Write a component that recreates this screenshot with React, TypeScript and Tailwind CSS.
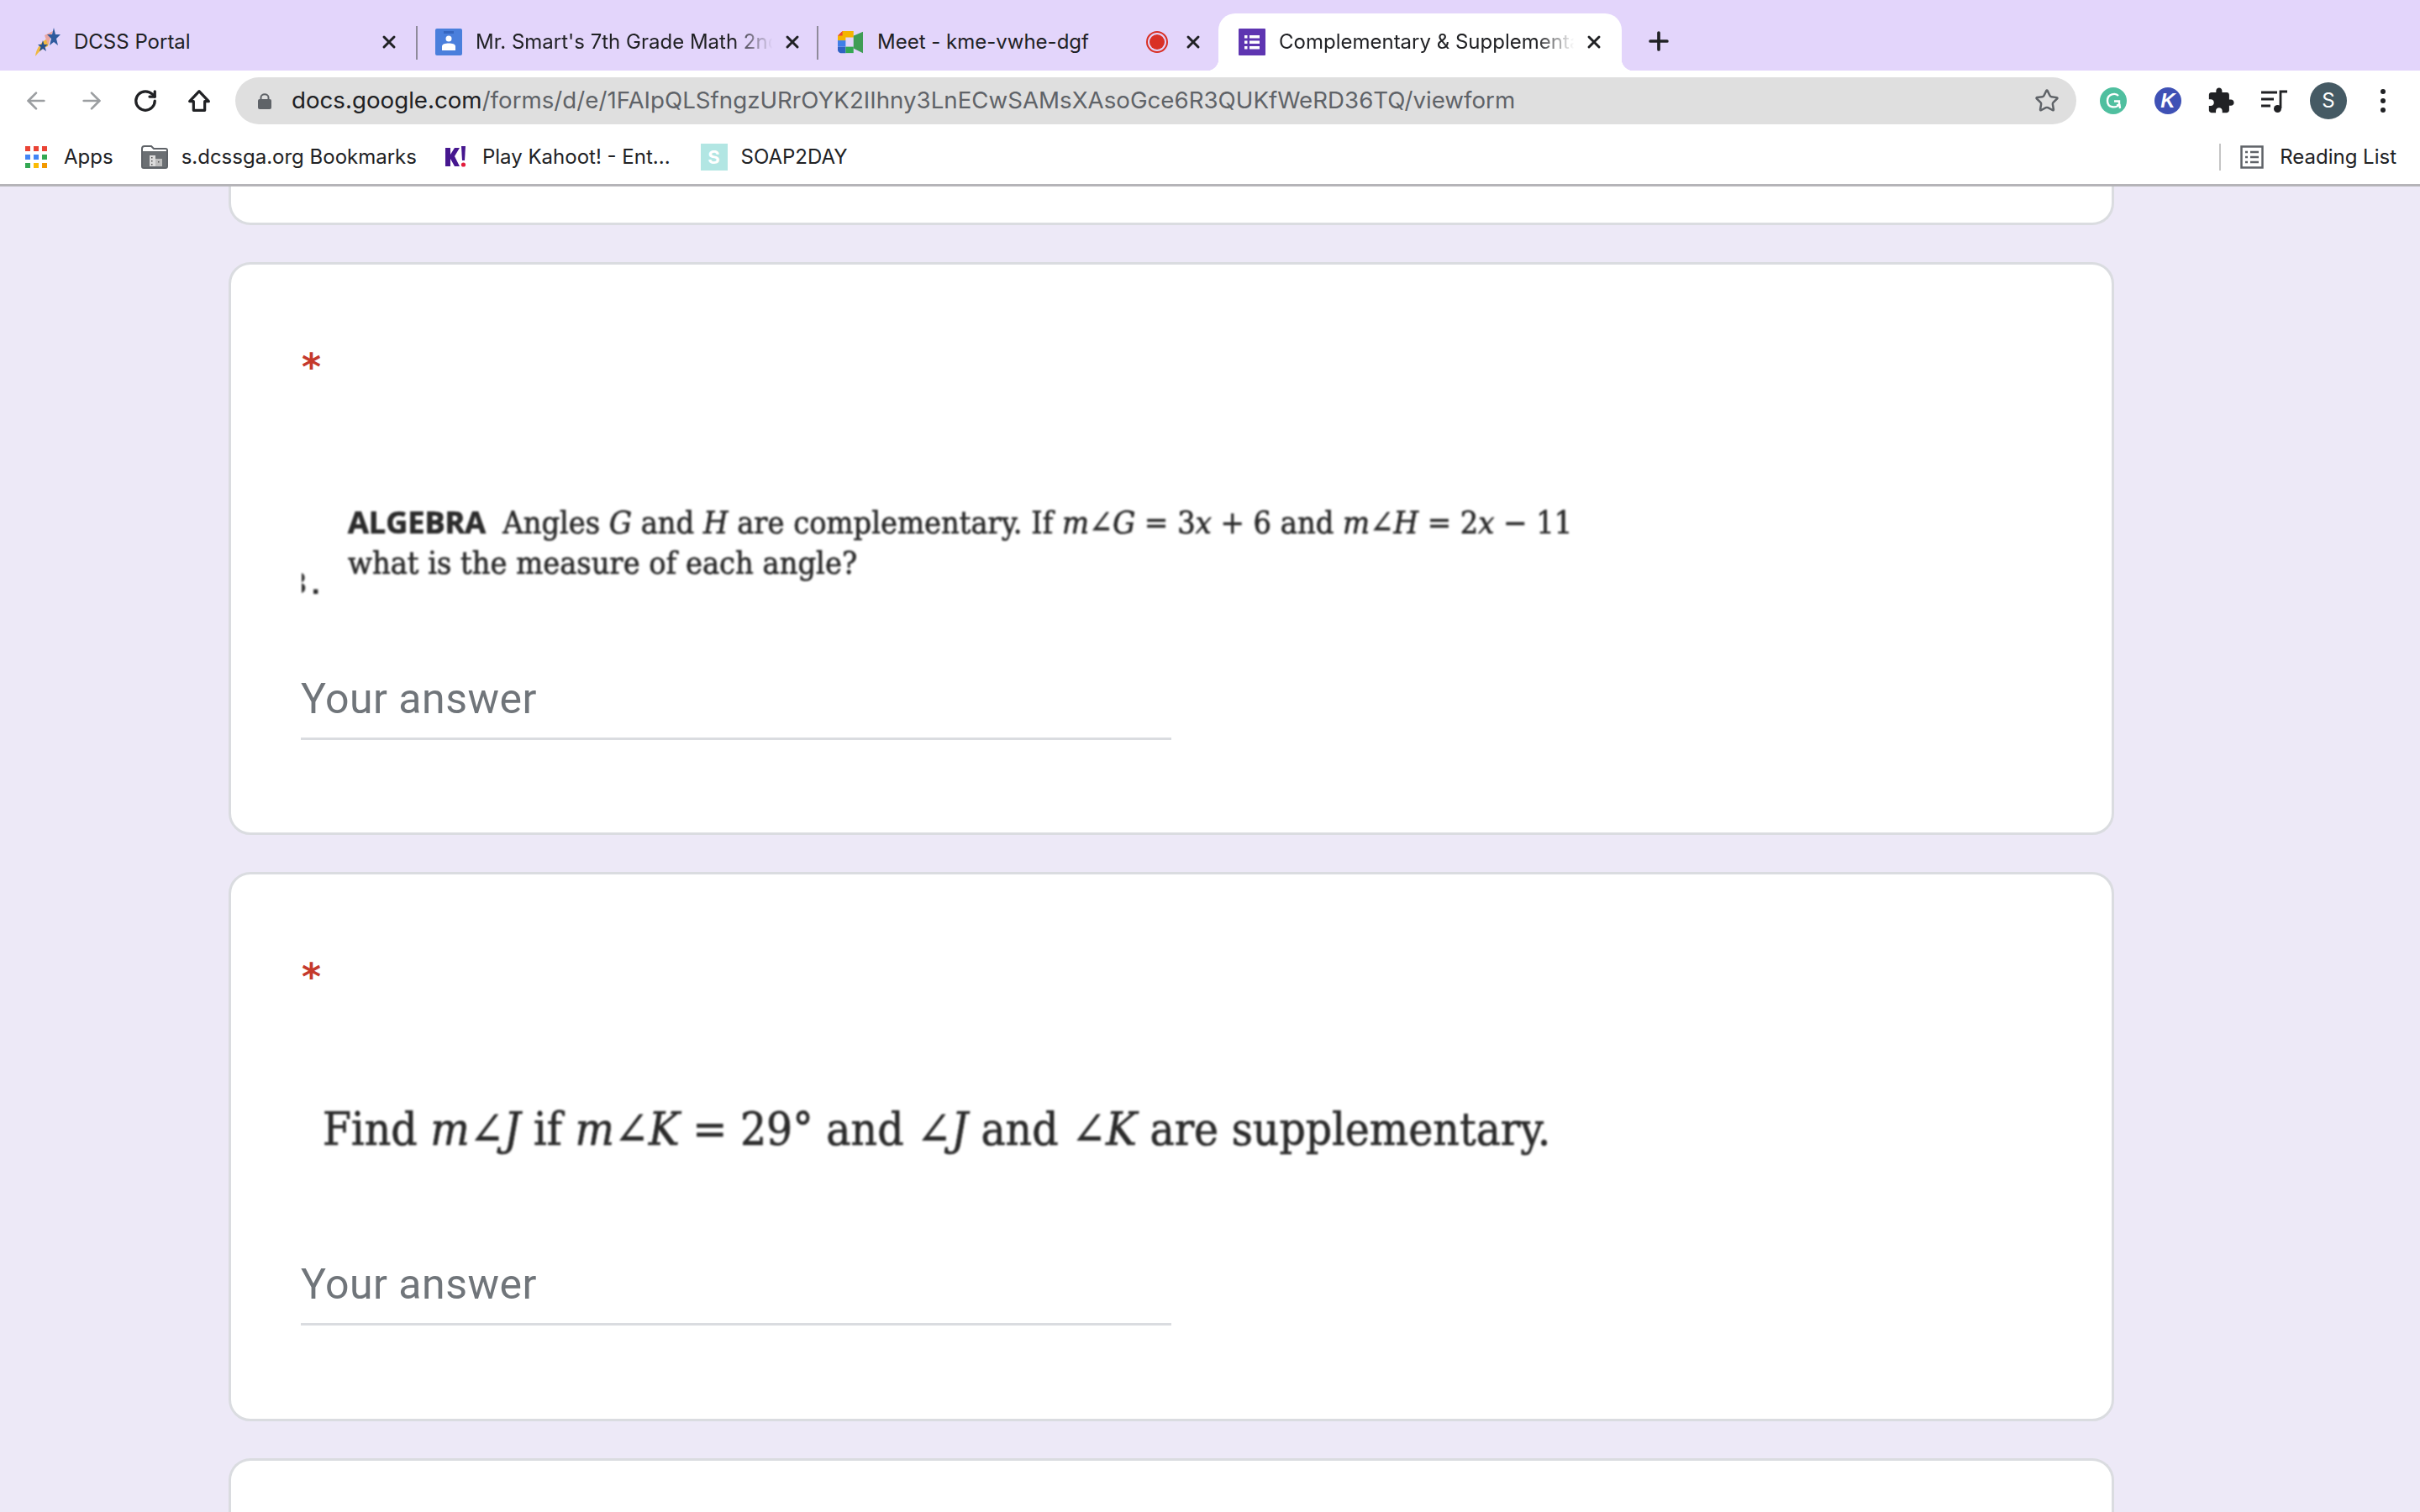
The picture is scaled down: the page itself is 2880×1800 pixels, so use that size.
import { ArrowLeft, ArrowRight, Plus, RotateCw, Star, X } from "lucide-react";
import type { ReactNode } from "react";

const uiFont = "font-['Inter','Liberation_Sans',sans-serif]";
const mathFont = "font-['DejaVu_Serif_Condensed','DejaVu_Serif','Liberation_Serif',serif]";
const inkStroke = "[-webkit-text-stroke:0.7px_#2b2b2b]";

function Tab({
  icon,
  title,
  fade,
  active,
  extra,
  width,
  padding = "pl-[24px] pr-[20px]",
}: {
  icon: ReactNode;
  title: string;
  fade?: boolean;
  active?: boolean;
  extra?: ReactNode;
  width: string;
  padding?: string;
}) {
  return (
    <div
      className={`relative flex h-[68px] shrink-0 items-center ${width} ${padding} ${
        active
          ? "rounded-t-[20px] bg-white before:absolute before:bottom-0 before:left-[-14px] before:h-[14px] before:w-[14px] before:bg-[radial-gradient(circle_at_0_0,transparent_14px,white_14.5px)] after:absolute after:bottom-0 after:right-[-14px] after:h-[14px] after:w-[14px] after:bg-[radial-gradient(circle_at_100%_0,transparent_14px,white_14.5px)]"
          : ""
      }`}
    >
      <div className="flex h-[32px] w-[32px] shrink-0 items-center justify-center">{icon}</div>
      <div
        className={`ml-[16px] min-w-0 flex-1 overflow-hidden whitespace-nowrap text-[24px] text-[#202124] ${
          fade ? "[mask-image:linear-gradient(to_right,black_86%,transparent_99%)]" : ""
        }`}
      >
        {title}
      </div>
      {extra}
      <X className="ml-[8px] shrink-0 text-[#202124]" size={24} strokeWidth={3} />
    </div>
  );
}

function TabDivider() {
  return <div className="mb-[13px] h-[40px] w-[2px] shrink-0 bg-[#8f8a9a]" />;
}

function PortalIcon() {
  return (
    <svg viewBox="0 0 32 38" className="h-[38px] w-[32px] shrink-0">
      <path d="M2 36 C3 26 9 18 20 13 L17 24 C11 26 6 31 2 36 Z" fill="#f0b840" />
      <path d="M13 11 L23 6 L17 22 Z" fill="#e9a5a0" />
      <path d="M24 2 L26 10 L32 10 L27 15 L29 23 L24 19 L19 23 L21 15 L16 10 L22 10 Z" fill="#2f5b9e" />
      <path d="M11 17 L12.5 22 L17 22 L13.5 25 L15 30 L11 27 L7 30 L8.5 25 L5 22 L9.5 22 Z" fill="#24508f" />
    </svg>
  );
}

function ClassroomIcon() {
  return (
    <svg viewBox="0 0 32 32" className="h-[32px] w-[32px]">
      <rect width="32" height="32" rx="2" fill="#4a7fdc" />
      <rect x="10" y="3" width="12" height="3" fill="#3566c0" />
      <circle cx="16" cy="12" r="3.5" fill="#fff" />
      <path d="M8 26 V21 C8 18.5 12 17.5 16 17.5 C20 17.5 24 18.5 24 21 V26 Z" fill="#fff" />
    </svg>
  );
}

function MeetIcon() {
  return (
    <svg viewBox="0 0 32 32" className="h-[30px] w-[32px]">
      <path d="M6 2 H20 V10 H10 V14 H0 V8 Z" fill="#f4b400" />
      <rect x="0" y="14" width="10" height="8" fill="#3f7ee8" />
      <path d="M0 22 H10 V30 H4 C2 30 0 28 0 26 Z" fill="#2f62c4" />
      <path d="M10 22 H20 V30 H10 Z" fill="#34a853" />
      <path d="M20 8 V24 L32 30 V3 Z" fill="#3f9d55" />
      <path d="M0 8 L6 2 V8 Z" fill="#ea4335" />
    </svg>
  );
}

function FormsIcon() {
  return (
    <svg viewBox="0 0 32 32" className="h-[32px] w-[32px]">
      <rect width="32" height="32" rx="1" fill="#5e35b1" />
      <rect x="7" y="8" width="3.5" height="3.5" fill="#fff" />
      <rect x="13" y="8" width="12" height="3.5" fill="#fff" />
      <rect x="7" y="14.5" width="3.5" height="3.5" fill="#fff" />
      <rect x="13" y="14.5" width="12" height="3.5" fill="#fff" />
      <rect x="7" y="21" width="3.5" height="3.5" fill="#fff" />
      <rect x="13" y="21" width="12" height="3.5" fill="#fff" />
    </svg>
  );
}

function AppsIcon() {
  const colors = ["#ea4335", "#ea4335", "#ea4335", "#4285f4", "#4285f4", "#34a853", "#34a853", "#fbbc05", "#f29900"];
  return (
    <div className="grid h-[26px] w-[26px] grid-cols-3 gap-[4px]">
      {colors.map((color, index) => (
        <div key={index} style={{ backgroundColor: color }} />
      ))}
    </div>
  );
}

function FolderIcon() {
  return (
    <svg viewBox="0 0 32 28" className="h-[28px] w-[32px]">
      <path d="M1 4 C1 2 2 1 4 1 H12 L15 4 H29 C30 4 31 5 31 6 V25 C31 26 30 27 29 27 H3 C2 27 1 26 1 25 Z" fill="none" stroke="#5f6368" strokeWidth="2" />
      <rect x="2" y="7" width="28" height="19" fill="#6b6f73" />
      <rect x="10" y="12" width="7" height="13" fill="#dcdcdc" />
      <rect x="17" y="16" width="8" height="9" fill="#bdbdbd" />
      <rect x="12" y="14" width="1.5" height="1.5" fill="#555" />
      <rect x="12" y="18" width="1.5" height="1.5" fill="#555" />
      <rect x="12" y="22" width="1.5" height="1.5" fill="#555" />
      <rect x="20" y="19" width="1.5" height="1.5" fill="#555" />
    </svg>
  );
}

function KahootIcon() {
  return (
    <svg viewBox="0 0 26 28" className="h-[28px] w-[26px]">
      <path d="M1 3 H7 V11 L12 3 H18 L12 13 L18 25 H12 L7 16 V25 H1 Z" fill="#46178f" />
      <path d="M20 1 L25 1 L24 18 L21 18 Z" fill="#46178f" />
      <circle cx="22.5" cy="23" r="2.6" fill="#e21b3c" />
    </svg>
  );
}

function ReadingListIcon() {
  return (
    <svg viewBox="0 0 28 28" className="h-[28px] w-[28px]" fill="none" stroke="#5f6368" strokeWidth="2.5">
      <rect x="1.5" y="1.5" width="25" height="25" />
      <path d="M6 8 H9 M12 8 H22 M6 14 H9 M12 14 H22 M6 20 H9 M12 20 H22" />
    </svg>
  );
}

function GrammarlyIcon() {
  return (
    <div className="flex h-[32px] w-[32px] items-center justify-center rounded-full bg-[#4fbf9f]">
      <svg viewBox="0 0 32 32" className="h-[32px] w-[32px]" fill="none" stroke="#fff" strokeWidth="2.4">
        <path d="M22 10 C19 6.5 9 7 9 16 C9 25 20 25 23 20 L23 16.5 H17" />
        <path d="M20 21.5 L23.5 21 L24 25" />
      </svg>
    </div>
  );
}

function Toolbar() {
  return (
    <div className="flex h-[64px] items-center bg-white pt-[8px]">
      <div className="flex w-[280px] shrink-0 items-center">
        <ArrowLeft className="ml-[27px] text-[#9b9ea1]" size={32} strokeWidth={2} />
        <ArrowRight className="ml-[34px] text-[#9b9ea1]" size={32} strokeWidth={2} />
        <RotateCw className="ml-[33px] text-[#202124]" size={30} strokeWidth={2.6} />
        <svg viewBox="0 0 24 24" className="ml-[33px] h-[32px] w-[32px]" fill="none" stroke="#202124" strokeWidth="2.4" strokeLinejoin="round">
          <path d="M12 3.5 L3.5 12.5 H7 V20.5 H17 V12.5 H20.5 Z" />
        </svg>
      </div>
      <div className="flex h-[56px] w-[2191px] shrink-0 items-center rounded-full bg-[#dfdfdf] pl-[27px] pr-[20px]">
        <svg viewBox="0 0 16 20" className="h-[22px] w-[16px] shrink-0">
          <path d="M3.5 9 V6 C3.5 1 12.5 1 12.5 6 V9" fill="none" stroke="#5f6368" strokeWidth="2" />
          <rect x="0" y="8" width="16" height="12" rx="2" fill="#5f6368" />
        </svg>
        <div className="ml-[24px] flex-1 whitespace-nowrap text-[27.7px] text-[#5f6368]">
          <span className="text-[#202124]">docs.google.com</span>/forms/d/e/1FAIpQLSfngzURrOYK2IIhny3LnECwSAMsXAsoGce6R3QUKfWeRD36TQ/viewform
        </div>
        <Star className="shrink-0 text-[#5f6368]" size={30} strokeWidth={2} />
      </div>
      <div className="ml-[28px]">
        <GrammarlyIcon />
      </div>
      <div className="ml-[33px] flex h-[32px] w-[32px] items-center justify-center rounded-full bg-[#3f51b5] font-['Liberation_Sans',sans-serif] text-[24px] font-bold italic leading-none text-white">
        K
      </div>
      <svg viewBox="0 0 24 24" className="ml-[30px] h-[34px] w-[34px]" fill="#202124">
        <path d="M20.5 11H19V7c0-1.1-.9-2-2-2h-4V3.5C13 2.12 11.88 1 10.5 1S8 2.12 8 3.5V5H4c-1.1 0-1.99.9-1.99 2v3.8H3.5c1.49 0 2.7 1.21 2.7 2.7s-1.21 2.7-2.7 2.7H2V20c0 1.1.9 2 2 2h3.8v-1.5c0-1.49 1.21-2.7 2.7-2.7 1.49 0 2.7 1.21 2.7 2.7V22H17c1.1 0 2-.9 2-2v-4h1.5c1.38 0 2.5-1.12 2.5-2.5S21.88 11 20.5 11z" />
      </svg>
      <svg viewBox="0 0 32 32" className="ml-[31px] h-[32px] w-[32px]" fill="none" stroke="#202124" strokeWidth="2.8">
        <path d="M0 6 H19 M0 14 H15 M0 22 H11" />
        <path d="M23 25 V5 H31" />
        <circle cx="19.5" cy="25.5" r="4.5" fill="#202124" stroke="none" />
      </svg>
      <div className="ml-[26px] flex h-[44px] w-[44px] items-center justify-center rounded-full bg-[#455a64] text-[24px] text-white">S</div>
      <div className="ml-[40px] flex h-[28px] flex-col justify-between">
        <div className="h-[6px] w-[6px] rounded-full bg-[#202124]" />
        <div className="h-[6px] w-[6px] rounded-full bg-[#202124]" />
        <div className="h-[6px] w-[6px] rounded-full bg-[#202124]" />
      </div>
    </div>
  );
}

function Bookmarks() {
  return (
    <div className="flex h-[74px] items-center border-b-[3px] border-[#b5b4b8] bg-white pl-[30px] pt-[7px] text-[24px] text-[#202124]">
      <AppsIcon />
      <span className="ml-[20px]">Apps</span>
      <div className="ml-[33px]">
        <FolderIcon />
      </div>
      <span className="ml-[16px]">s.dcssga.org Bookmarks</span>
      <div className="ml-[33px]">
        <KahootIcon />
      </div>
      <span className="ml-[19px]">Play Kahoot! - Ent...</span>
      <div className="ml-[36px] flex h-[32px] w-[32px] items-center justify-center bg-[#b2e6e3] text-[22px] font-bold text-white">S</div>
      <span className="ml-[16px]">SOAP2DAY</span>
      <div className="ml-auto flex items-center pr-[28px]">
        <div className="h-[32px] w-[2px] bg-[#c4c4c4]" />
        <div className="ml-[23px]">
          <ReadingListIcon />
        </div>
        <span className="ml-[19px]">Reading List</span>
      </div>
    </div>
  );
}

function AnswerField({ className }: { className: string }) {
  return (
    <div className={`ml-[83px] w-[1036px] border-b-[3px] border-[#dadce0] pb-[16px] font-['Roboto',sans-serif] text-[50px] leading-[60px] tracking-[0.5px] text-[#70757a] ${className}`}>
      Your answer
    </div>
  );
}

function Asterisk() {
  return <div className="ml-[84px] mt-[92px] h-[60px] font-['DejaVu_Sans',sans-serif] text-[44px] font-bold leading-[60px] text-[#c5392c]">*</div>;
}

function QuestionCard({ children, height }: { children: ReactNode; height: string }) {
  return <section className={`w-[2244px] rounded-[26px] border-[3px] border-[#dadce0] bg-white ${height}`}>{children}</section>;
}

export default function App() {
  return (
    <div className={`flex h-[1800px] flex-col overflow-hidden bg-[#ede9f7] ${uiFont}`}>
      <div className="flex h-[84px] items-end bg-[#e3d5fb] pl-[16px]">
        <Tab width="w-[479px]" icon={<PortalIcon />} title="DCSS Portal" />
        <TabDivider />
        <Tab width="w-[475px]" padding="pl-[21px] pr-[17px]" icon={<ClassroomIcon />} title="Mr. Smart's 7th Grade Math 2nd Period" fade />
        <TabDivider />
        <Tab
          width="w-[476px]"
          padding="pl-[22px] pr-[18px]"
          icon={<MeetIcon />}
          title="Meet - kme-vwhe-dgf"
          extra={
            <div className="mr-[10px] flex h-[26px] w-[26px] shrink-0 items-center justify-center rounded-full border-[2px] border-[#d93025]">
              <div className="h-[18px] w-[18px] rounded-full bg-[#d93025]" />
            </div>
          }
        />
        <Tab active width="w-[480px]" padding="pl-[24px] pr-[21px]" icon={<FormsIcon />} title="Complementary & Supplementary Angles" fade />
        <Plus className="mb-[18px] ml-[27px] text-[#202124]" size={34} strokeWidth={2.6} />
      </div>
      <Toolbar />
      <Bookmarks />
      <main className="flex min-h-0 flex-1 flex-col items-start gap-[44px] pl-[272px]">
        <div className="h-[46px] w-[2244px] rounded-b-[26px] border-[3px] border-t-0 border-[#dadce0] bg-white" />
        <QuestionCard height="h-[682px]">
          <Asterisk />
          <div className={`ml-[84px] mt-[131px] flex h-[96px] text-[37.6px] leading-[48px] text-[#2b2b2b] blur-[1px] ${mathFont}`}>
            <div className="mt-[72px] flex h-[48px] w-[22px] shrink-0 justify-end overflow-hidden font-['Liberation_Sans',sans-serif] font-bold">
              <span className="shrink-0">3</span>
              <span className="ml-[6px] shrink-0">.</span>
            </div>
            <div className="ml-[33px]">
              <div className={`whitespace-nowrap ${inkStroke}`}>
                <span className="font-['Open_Sans','Liberation_Sans',sans-serif] text-[36px] font-bold">ALGEBRA</span>
                <span className="ml-[20px]">
                  Angles <i>G</i> and <i>H</i> are complementary. If <i>m</i>∠<i>G</i> = 3<i>x</i> + 6 and <i>m</i>∠<i>H</i> = 2<i>x</i> − 11
                </span>
              </div>
              <div className={`whitespace-nowrap ${inkStroke}`}>what is the measure of each angle?</div>
            </div>
          </div>
          <AnswerField className="mt-[108px]" />
        </QuestionCard>
        <QuestionCard height="h-[654px]">
          <Asterisk />
          <div className={`ml-[109px] mt-[119px] whitespace-nowrap text-[54.5px] leading-[64px] text-[#2b2b2b] blur-[1px] ${mathFont} ${inkStroke}`}>
            Find <i>m</i>∠<i>J</i> if <i>m</i>∠<i>K</i> = 29° and ∠<i>J</i> and ∠<i>K</i> are supplementary.
          </div>
          <AnswerField className="mt-[123px]" />
        </QuestionCard>
        <section className="min-h-0 w-[2244px] flex-1 rounded-t-[26px] border-[3px] border-b-0 border-[#dadce0] bg-white" />
      </main>
    </div>
  );
}
